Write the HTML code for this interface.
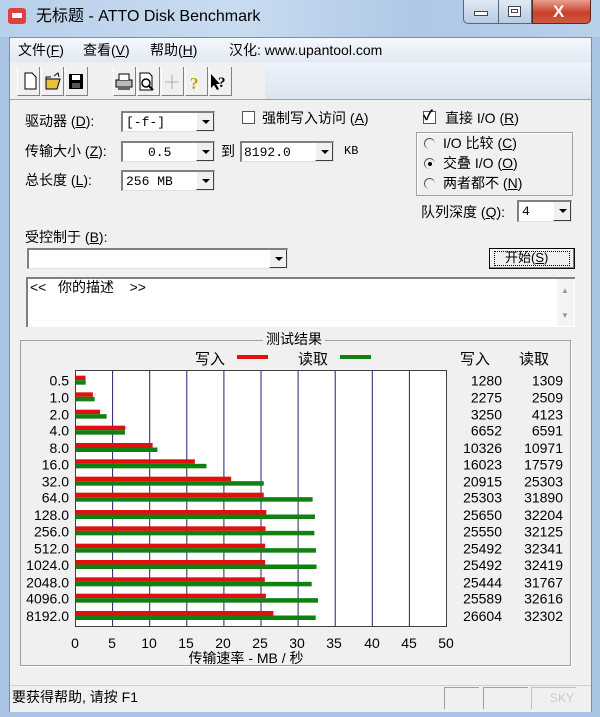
<!DOCTYPE html>
<html><head><meta charset="utf-8"><style>
*{margin:0;padding:0;box-sizing:border-box}
body{width:600px;height:717px;overflow:hidden;position:relative;background:#a9c4e2;font-family:"Liberation Sans","Noto Sans CJK SC",sans-serif;font-size:14px;color:#000}
.a{position:absolute}
.t{position:absolute;white-space:nowrap;line-height:1}
.combo{position:absolute;background:#fff;border-top:2px solid #808080;border-left:2px solid #808080;border-right:1px solid #e0e0e0;border-bottom:1px solid #e0e0e0}
.combo .dd{position:absolute;right:0;top:0;bottom:0;width:18px;background:#f0f0f0;border-left:1px solid #fff;border-right:1px solid #404040;border-bottom:1px solid #404040}
.combo .dd:after{content:"";position:absolute;left:5px;top:7px;border-left:4px solid transparent;border-right:4px solid transparent;border-top:4px solid #000}
.combo span{position:absolute;left:3px;top:2px;font-size:13px;font-family:"Liberation Mono","Noto Sans CJK SC",monospace}
.tb{position:absolute;top:67px;width:23px;height:29px;border-right:1px solid #808080;border-bottom:1px solid #808080;border-left:1px solid #fff;background:#f0f0f0}
.rad{position:absolute;width:11px;height:11px;border-radius:50%;border-left:1px solid #555;border-top:1px solid #555}
</style></head><body>
<div class="a" style="left:0;top:0;width:600px;height:37px;background:linear-gradient(90deg,#b8d0ea,#c9dbef 40%,#aec8e6 70%,#b9d0ea)"></div>
<div class="a" style="left:8px;top:8px;width:18px;height:16px;border-radius:3px;background:#e04040"></div>
<div class="a" style="left:12px;top:13px;width:10px;height:5px;background:#fff"></div>
<div class="t" style="left:36px;top:9px;font-size:16px">无标题 - ATTO Disk Benchmark</div>
<div class="a" style="left:463px;top:0;width:69px;height:24px;border:1px solid #55687f;border-top:none;border-radius:0 0 0 5px;background:linear-gradient(#dfe9f5,#b8cbe3)"></div>
<div class="a" style="left:498px;top:0;width:1px;height:24px;background:#55687f"></div>
<div class="a" style="left:474px;top:11px;width:14px;height:5px;background:#fff;border:1px solid #445"></div>
<div class="a" style="left:508px;top:6px;width:13px;height:11px;background:#fff;border:1px solid #445"></div>
<div class="a" style="left:511px;top:9px;width:7px;height:4px;border:1px solid #445"></div>
<div class="a" style="left:532px;top:0;width:59px;height:24px;border:1px solid #5a2a20;border-top:none;border-radius:0 0 5px 0;background:linear-gradient(#e8a090,#c8402c 55%,#d05a40)"></div>
<div class="t" style="left:553px;top:3px;color:#fff;font-weight:bold;font-size:17px">X</div>
<div class="a" style="left:9px;top:37px;width:583px;height:675px;background:#f0f0f0;border:1px solid #7d8ea5"></div>
<div class="a" style="left:10px;top:38px;width:581px;height:24px;background:linear-gradient(#f5f8fc,#e2e9f3)"></div>
<div class="t" style="left:18px;top:43px;font-size:14px">文件(<u>F</u>)</div>
<div class="t" style="left:83px;top:43px;font-size:14px">查看(<u>V</u>)</div>
<div class="t" style="left:150px;top:43px;font-size:14px">帮助(<u>H</u>)</div>
<div class="t" style="left:229px;top:43px;font-size:14px">汉化: www.upantool.com</div>
<div class="a" style="left:10px;top:62px;width:581px;height:37px;background:linear-gradient(#eef3fa,#dbe5f1)"></div>
<div class="a" style="left:10px;top:62px;width:255px;height:37px;background:#f0f0f0"></div>
<div class="tb" style="left:17px"></div><div class="tb" style="left:41px"></div><div class="tb" style="left:65px"></div>
<div class="tb" style="left:113px"></div><div class="tb" style="left:137px"></div><div class="tb" style="left:161px"></div><div class="tb" style="left:185px"></div><div class="tb" style="left:209px"></div>
<svg class="a" style="left:17px;top:67px" width="220" height="29">
<path d="M8 6h7l4 4v12H8z" fill="#fff" stroke="#000"/>
<path d="M29 12h14l-3 10H29z" fill="#e8c040" stroke="#000"/><path d="M29 22V10h5" fill="none" stroke="#000"/><path d="M37 9l4-3 1 4" stroke="#000" fill="none"/>
<rect x="52" y="7" width="14" height="15" fill="#000"/><rect x="55" y="8" width="8" height="5" fill="#fff"/><rect x="55" y="16" width="8" height="5" fill="#555"/>
<path d="M99 13h16v7H99z" fill="#bbb" stroke="#000"/><path d="M102 13V7h10v6" fill="#fff" stroke="#000"/><rect x="101" y="19" width="12" height="4" fill="#666"/>
<path d="M123 6h9l3 3v14h-12z" fill="#fff" stroke="#000"/><circle cx="129" cy="16" r="4" fill="none" stroke="#000" stroke-width="1.5"/><path d="M132 19l4 4" stroke="#000" stroke-width="2"/>
<path d="M155 8v14M148 15h14" stroke="#aaa"/>
<text x="173" y="22" font-size="17" font-weight="bold" fill="#c8a000" font-family="Liberation Serif">?</text>
<path d="M194 7l0 14 3-3 3 5 2-1-3-5h4z" fill="#000"/><text x="201" y="20" font-size="15" font-weight="bold" fill="#000" font-family="Liberation Serif">?</text>
</svg>
<div class="a" style="left:10px;top:99px;width:581px;height:1px;background:#a0a0a0"></div>
<div class="t" style="left:25px;top:114px">驱动器 (<u>D</u>):</div>
<div class="combo" style="left:121px;top:111px;width:94px;height:21px"><span>[-f-]</span><div class="dd"></div></div>
<div class="a" style="left:242px;top:111px;width:13px;height:13px;border:1px solid #555;background:#fff"></div>
<div class="t" style="left:262px;top:111px">强制写入访问 (<u>A</u>)</div>
<div class="t" style="left:25px;top:144px">传输大小 (<u>Z</u>):</div>
<div class="combo" style="left:121px;top:141px;width:94px;height:21px"><span style="left:25px">0.5</span><div class="dd"></div></div>
<div class="t" style="left:221px;top:144px">到</div>
<div class="combo" style="left:240px;top:141px;width:94px;height:21px"><span style="left:2px">8192.0</span><div class="dd"></div></div>
<div class="t" style="left:344px;top:145px;font-size:12px;font-family:'Liberation Mono',monospace">KB</div>
<div class="t" style="left:25px;top:173px">总长度 (<u>L</u>):</div>
<div class="combo" style="left:121px;top:170px;width:94px;height:21px"><span>256 MB</span><div class="dd"></div></div>
<div class="a" style="left:423px;top:111px;width:13px;height:13px;border:1px solid #555;background:#fff"></div>
<div class="t" style="left:423px;top:108px;font-size:14px;font-weight:bold">✓</div>
<div class="t" style="left:445px;top:111px">直接 I/O (<u>R</u>)</div>
<div class="a" style="left:416px;top:132px;width:157px;height:64px;border:1px solid #a0a0a0;box-shadow:inset 1px 1px 0 #fff"></div>
<div class="rad" style="left:424px;top:138px"></div>
<div class="t" style="left:443px;top:136px">I/O 比较 (<u>C</u>)</div>
<div class="rad" style="left:424px;top:158px"></div><div class="a" style="left:428px;top:162px;width:4px;height:4px;background:#000;border-radius:50%"></div>
<div class="t" style="left:443px;top:156px">交叠 I/O (<u>O</u>)</div>
<div class="rad" style="left:424px;top:178px"></div>
<div class="t" style="left:443px;top:176px">两者都不 (<u>N</u>)</div>
<div class="t" style="left:421px;top:205px">队列深度 (<u>Q</u>):</div>
<div class="combo" style="left:517px;top:200px;width:55px;height:22px"><span>4</span><div class="dd"></div></div>
<div class="t" style="left:25px;top:230px">受控制于 (<u>B</u>):</div>
<div class="combo" style="left:27px;top:248px;width:261px;height:21px"><div class="dd"></div></div>
<div class="a" style="left:489px;top:248px;width:86px;height:21px;border:1px solid #000;background:#f0f0f0;box-shadow:inset -1px -1px 0 #808080,inset 1px 1px 0 #fff"></div>
<div class="a" style="left:494px;top:251px;width:76px;height:15px;border:1px dotted #000"></div>
<div class="t" style="left:505px;top:251px;font-size:13px">开始(<u>S</u>)</div>
<div class="a" style="left:26px;top:277px;width:549px;height:50px;background:#fff;border-top:2px solid #808080;border-left:2px solid #808080"></div>
<div class="a" style="left:557px;top:279px;width:17px;height:47px;background:#f4f4f4"></div>
<div class="t" style="left:561px;top:287px;font-size:8px;color:#999">▲</div>
<div class="t" style="left:561px;top:312px;font-size:8px;color:#999">▼</div>
<div class="t" style="left:30px;top:280px">&lt;&lt;&nbsp;&nbsp; 你的描述 &nbsp;&nbsp; &gt;&gt;</div>
<div class="a" style="left:20px;top:340px;width:551px;height:326px;border:1px solid #a0a0a0;box-shadow:1px 1px 0 #fff"></div>
<div class="t" style="left:263px;top:332px;background:#f0f0f0;padding:0 3px;font-size:14px">测试结果</div>
<svg class="a" style="left:0;top:0" width="600" height="717" font-family="Liberation Sans,Noto Sans CJK SC,sans-serif">
<text x="195" y="364" font-size="15">写入</text><rect x="237" y="355" width="31" height="4" fill="#e01010"/>
<text x="298" y="364" font-size="15">读取</text><rect x="340" y="355" width="31" height="4" fill="#108010"/>
<text x="460" y="364" font-size="15">写入</text><text x="519" y="364" font-size="15">读取</text>
<rect x="75.5" y="370.5" width="371" height="256" fill="#fff" stroke="#404040"/>
<g stroke="#202070">
<line x1="112.6" y1="371" x2="112.6" y2="626"/><line x1="149.7" y1="371" x2="149.7" y2="626"/><line x1="186.8" y1="371" x2="186.8" y2="626"/><line x1="223.9" y1="371" x2="223.9" y2="626"/><line x1="261" y1="371" x2="261" y2="626"/><line x1="298.1" y1="371" x2="298.1" y2="626"/><line x1="335.2" y1="371" x2="335.2" y2="626"/><line x1="372.3" y1="371" x2="372.3" y2="626"/><line x1="409.4" y1="371" x2="409.4" y2="626"/>
</g>
<g id="bars"></g>
<g font-size="14" text-anchor="middle" fill="#000">
<text x="75" y="648">0</text><text x="112" y="648">5</text><text x="149" y="648">10</text><text x="186" y="648">15</text><text x="223" y="648">20</text><text x="260" y="648">25</text><text x="297" y="648">30</text><text x="334" y="648">35</text><text x="372" y="648">40</text><text x="409" y="648">45</text><text x="446" y="648">50</text>
<text x="246" y="663">传输速率 - MB / 秒</text>
</g>
</svg>
<div class="a" style="left:10px;top:685px;width:581px;height:27px;background:#f0f0f0;border-top:1px solid #d0d0d0"></div>
<div class="t" style="left:12px;top:690px">要获得帮助, 请按 F1</div>
<div class="a" style="left:444px;top:687px;width:35px;height:22px;border-left:1px solid #a0a0a0;border-top:1px solid #a0a0a0"></div>
<div class="a" style="left:483px;top:687px;width:45px;height:22px;border-left:1px solid #a0a0a0;border-top:1px solid #a0a0a0"></div>
<div class="a" style="left:531px;top:687px;width:45px;height:22px;border-left:1px solid #c0c0c0;border-top:1px solid #c0c0c0"></div>
<div class="t" style="left:550px;top:692px;color:#ccc;font-size:12px">SKY</div>
<script>
var w=[1280,2275,3250,6652,10326,16023,20915,25303,25650,25550,25492,25492,25444,25589,26604];
var r=[1309,2509,4123,6591,10971,17579,25303,31890,32204,32125,32341,32419,31767,32616,32302];
var lab=["0.5","1.0","2.0","4.0","8.0","16.0","32.0","64.0","128.0","256.0","512.0","1024.0","2048.0","4096.0","8192.0"];
var ys=[152,202,254,302,354,403,455,503,555,604,656,705,757,806,858];
var s="",k=371/50000;
for(var i=0;i<15;i++){var c=330+ys[i]/3;
s+='<rect x="76" y="'+(c-5)+'" width="'+(w[i]*k)+'" height="4.5" fill="#e01010"/>';
s+='<rect x="76" y="'+(c-0.5)+'" width="'+(r[i]*k)+'" height="4.5" fill="#108010"/>';
s+='<text x="69" y="'+(c+5)+'" font-size="14" text-anchor="end">'+lab[i]+'</text>';
s+='<text x="502" y="'+(c+5)+'" font-size="14" text-anchor="end">'+w[i]+'</text>';
s+='<text x="563" y="'+(c+5)+'" font-size="14" text-anchor="end">'+r[i]+'</text>';}
document.getElementById("bars").innerHTML=s;
</script>
</body></html>
